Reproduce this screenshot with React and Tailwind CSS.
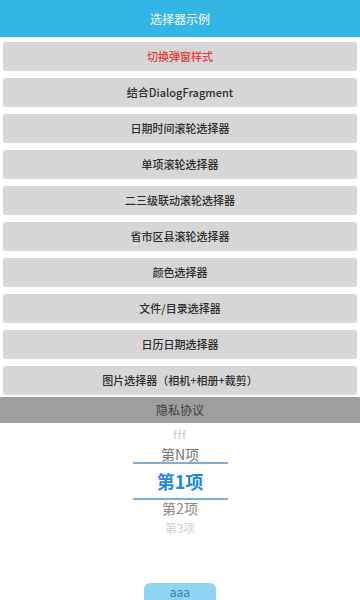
import React from 'react';

const buttons = [
  { label: '切换弹窗样式', red: true },
  { label: '结合DialogFragment' },
  { label: '日期时间滚轮选择器' },
  { label: '单项滚轮选择器' },
  { label: '二三级联动滚轮选择器' },
  { label: '省市区县滚轮选择器' },
  { label: '颜色选择器' },
  { label: '文件/目录选择器' },
  { label: '日历日期选择器' },
  { label: '图片选择器（相机+相册+裁剪）' },
];

const font = { fontFamily: '"Noto Sans CJK SC", Roboto, sans-serif' };

export default function App() {
  return (
    <div className="w-[360px] h-[600px] bg-white overflow-hidden flex flex-col" style={font}>
      {/* Title bar */}
      <div className="h-[37px] bg-[#33b5e5] flex items-center justify-center text-white text-[12px]">
        选择器示例
      </div>

      {/* Demo buttons */}
      <div className="flex flex-col gap-[8px] px-[3px] pt-[5px]">
        {buttons.map((b, i) => (
          <div
            key={i}
            className={`h-[28px] rounded-[3px] bg-[#d6d6d6] shadow-[0_1px_1px_rgba(0,0,0,0.15)] flex items-center justify-center text-[11px] font-medium ${
              b.red ? 'text-[#e53935]' : 'text-[#2e2e2e]'
            }`}
          >
            {b.label}
          </div>
        ))}
      </div>

      {/* Privacy bar */}
      <div className="mt-[3px] h-[26px] bg-[#9e9e9e] flex items-center justify-center text-[12px] text-[#3e3e3e]">
        隐私协议
      </div>

      {/* Wheel picker */}
      <div className="flex flex-col items-center">
        <div className="h-[22px] flex items-center text-[11px] tracking-[1px] text-[#c4c4c4] leading-none">fff</div>
        <div className="h-[17px] flex items-center text-[14px] text-[#777777] leading-none">第N项</div>
        <div className="w-[95px] h-[38px] border-y-2 border-[#7cafd6] flex items-center justify-center text-[18px] font-bold text-[#1e88e5] leading-none">
          第1项
        </div>
        <div className="h-[15px] flex items-center text-[14px] text-[#888888] leading-none">第2项</div>
        <div className="h-[25px] flex items-center text-[12px] text-[#cfcfcf] leading-none">第3项</div>
      </div>

      {/* Bottom button */}
      <div className="mt-auto flex justify-center">
        <div className="w-[72px] h-[17px] rounded-t-[6px] bg-[#8fd3f2] flex items-start justify-center pt-[3px] text-[12px] text-[#3d7fa6] leading-none">
          aaa
        </div>
      </div>
    </div>
  );
}
